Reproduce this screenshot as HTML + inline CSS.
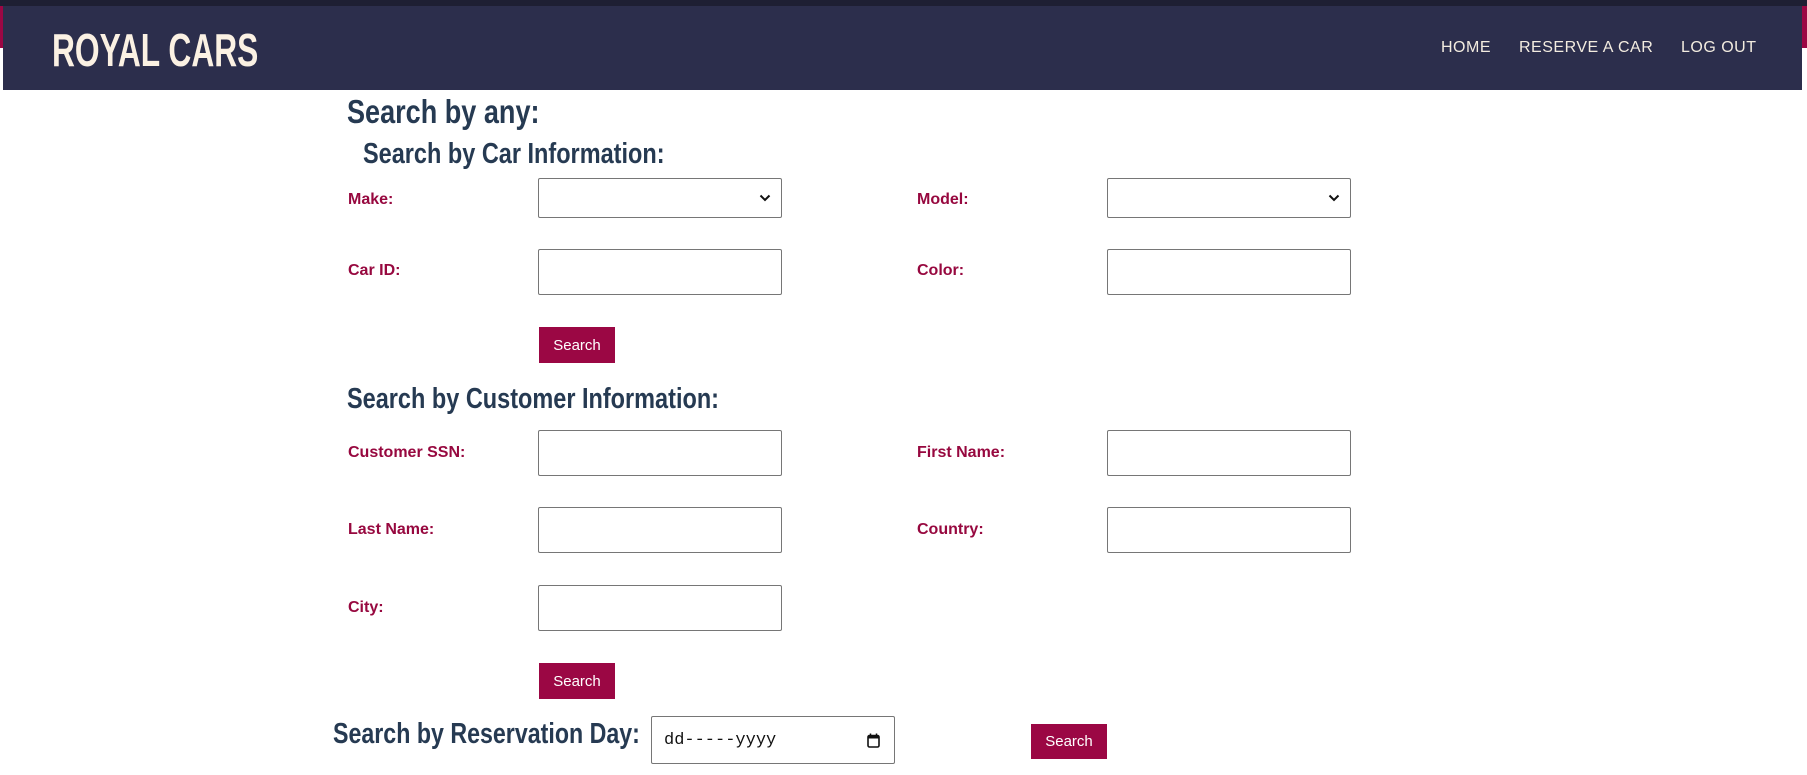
<!DOCTYPE html>
<html><head><meta charset="utf-8"><style>
*{margin:0;padding:0;box-sizing:border-box}
body{width:1807px;height:775px;background:#fff;position:relative;overflow:hidden;font-family:"Liberation Sans",sans-serif}
.a{position:absolute}
.h{position:absolute;font-weight:bold;color:#263a52;line-height:1;white-space:nowrap;transform-origin:0 0}
.l{position:absolute;font-size:16px;font-weight:bold;line-height:1;color:#97083f;white-space:nowrap}
.in{position:absolute;border:1px solid #767676;border-radius:2px;background:#fff}
.btn{position:absolute;background:#9b0744;color:#fff;font-size:15px;display:flex;align-items:center;justify-content:center}
.nav{position:absolute;top:40px;font-size:16px;color:#f3ece0;letter-spacing:.5px;line-height:1}
</style></head><body>
<div class="a" style="left:0;top:0;width:1807px;height:6px;background:#1e1f33"></div>
<div class="a" style="left:0;top:6px;width:4px;height:42px;background:#9b0744"></div>
<div class="a" style="left:1802px;top:6px;width:5px;height:42px;background:#9b0744"></div>
<div class="a" style="left:3px;top:6px;width:1799px;height:84px;background:#2c2e4c"></div>
<div class="h" style="left:52px;top:27px;font-size:46px;color:#fbf1e3;transform:scaleX(.69)">ROYAL CARS</div>
<div class="nav" style="left:1441px">HOME</div>
<div class="nav" style="left:1519px">RESERVE A CAR</div>
<div class="nav" style="left:1681px">LOG OUT</div>

<div class="h" style="left:347px;top:95px;font-size:33px;transform:scaleX(.82)">Search by any:</div>
<div class="h" style="left:363px;top:140px;font-size:29px;transform:scaleX(.81)">Search by Car Information:</div>

<div class="l" style="left:348px;top:192px">Make:</div>
<div class="in" style="left:538px;top:178px;width:244px;height:40px"><svg class="a" style="right:10px;top:14px" width="12" height="10" viewBox="0 0 12 10"><path d="M1.5 2.5L6 7l4.5-4.5" stroke="#111" stroke-width="2" fill="none"/></svg></div>
<div class="l" style="left:917px;top:192px">Model:</div>
<div class="in" style="left:1107px;top:178px;width:244px;height:40px"><svg class="a" style="right:10px;top:14px" width="12" height="10" viewBox="0 0 12 10"><path d="M1.5 2.5L6 7l4.5-4.5" stroke="#111" stroke-width="2" fill="none"/></svg></div>

<div class="l" style="left:348px;top:263px">Car ID:</div>
<div class="in" style="left:538px;top:249px;width:244px;height:46px"></div>
<div class="l" style="left:917px;top:263px">Color:</div>
<div class="in" style="left:1107px;top:249px;width:244px;height:46px"></div>

<div class="btn" style="left:539px;top:327px;width:76px;height:36px">Search</div>

<div class="h" style="left:347px;top:385px;font-size:29px;transform:scaleX(.81)">Search by Customer Information:</div>

<div class="l" style="left:348px;top:445px">Customer SSN:</div>
<div class="in" style="left:538px;top:430px;width:244px;height:46px"></div>
<div class="l" style="left:917px;top:445px">First Name:</div>
<div class="in" style="left:1107px;top:430px;width:244px;height:46px"></div>

<div class="l" style="left:348px;top:522px">Last Name:</div>
<div class="in" style="left:538px;top:507px;width:244px;height:46px"></div>
<div class="l" style="left:917px;top:522px">Country:</div>
<div class="in" style="left:1107px;top:507px;width:244px;height:46px"></div>

<div class="l" style="left:348px;top:600px">City:</div>
<div class="in" style="left:538px;top:585px;width:244px;height:46px"></div>

<div class="btn" style="left:539px;top:663px;width:76px;height:36px">Search</div>

<div class="h" style="left:333px;top:720px;font-size:29px;transform:scaleX(.8)">Search by Reservation Day:</div>
<div class="in" style="left:651px;top:716px;width:244px;height:48px">
<span class="a" style="left:12px;top:14px;font-family:'Liberation Mono',monospace;font-size:17px;color:#111">dd-----yyyy</span>
<svg class="a" style="left:215px;top:16px" width="13" height="15" viewBox="0 0 13 15"><rect x="1" y="2.5" width="11" height="11.5" rx="1.5" fill="none" stroke="#111" stroke-width="1.6"/><rect x="1" y="2.5" width="11" height="3" fill="#111"/><path d="M3.5 0.5v3M9.5 0.5v3" stroke="#111" stroke-width="1.5"/></svg>
</div>
<div class="btn" style="left:1031px;top:724px;width:76px;height:35px">Search</div>
</body></html>
